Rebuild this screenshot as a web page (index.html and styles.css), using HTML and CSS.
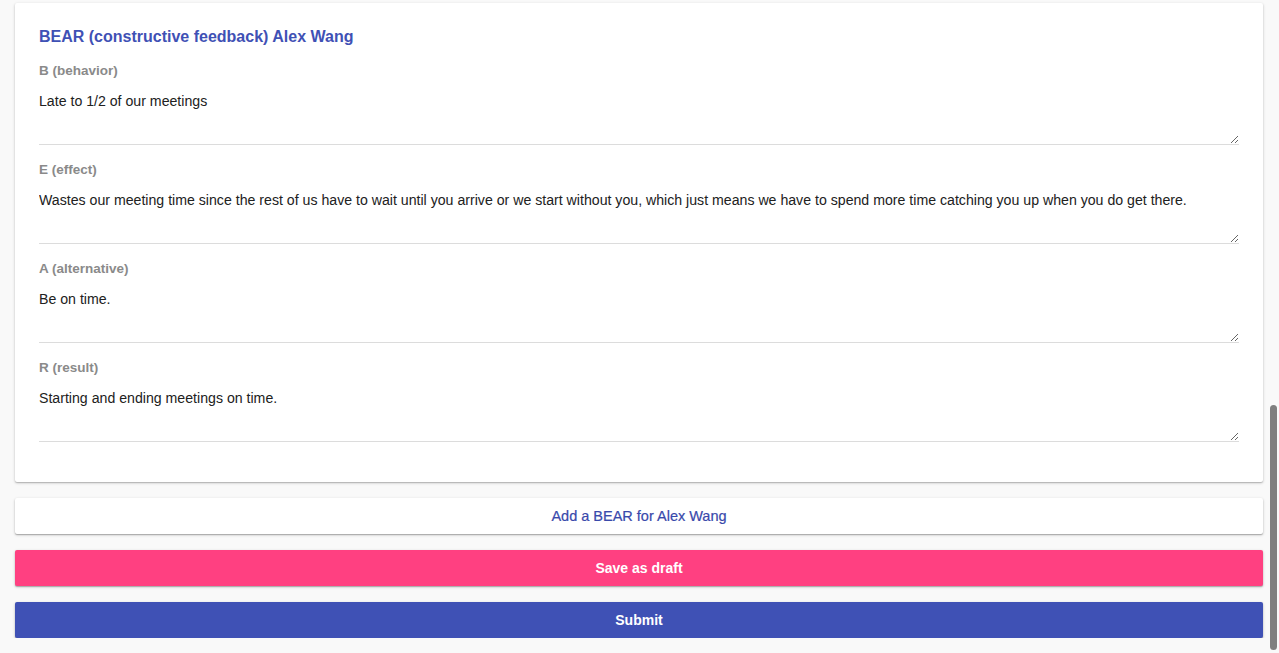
FILE: index.html
```html
<!DOCTYPE html>
<html>
<head>
<meta charset="utf-8">
<link rel="stylesheet" href="styles.css">
</head>
<body>
<main class="page">
  <section class="card">
    <h2 class="card-title">BEAR (constructive feedback) Alex Wang</h2>
    <div class="field">
      <label class="field-label">B (behavior)</label>
      <textarea class="field-input">Late to 1/2 of our meetings</textarea>
    </div>
    <div class="field">
      <label class="field-label">E (effect)</label>
      <textarea class="field-input">Wastes our meeting time since the rest of us have to wait until you arrive or we start without you, which just means we have to spend more time catching you up when you do get there.</textarea>
    </div>
    <div class="field">
      <label class="field-label">A (alternative)</label>
      <textarea class="field-input">Be on time.</textarea>
    </div>
    <div class="field">
      <label class="field-label">R (result)</label>
      <textarea class="field-input">Starting and ending meetings on time.</textarea>
    </div>
  </section>
  <button class="btn btn-add">Add a BEAR for Alex Wang</button>
  <button class="btn btn-draft">Save as draft</button>
  <button class="btn btn-submit">Submit</button>
</main>
<div class="scroll-thumb"></div>
</body>
</html>
```
FILE: styles.css
```css
html, body {
  margin: 0;
  padding: 0;
  background: #f9f9f9;
  font-family: "Liberation Sans", Arial, sans-serif;
  overflow: hidden;
}

.page {
  display: flex;
  flex-direction: column;
  gap: 16px;
  margin: 3px 16px 0 15px;
}

.card {
  background: #fff;
  border-radius: 2px;
  box-shadow: 0 1px 3px rgba(0,0,0,0.22), 0 1px 1px rgba(0,0,0,0.14);
  padding: 24px 24px 40px 24px;
  display: flex;
  flex-direction: column;
}

.card-title {
  margin: 0 0 16px 0;
  font-size: 16px;
  line-height: 20px;
  font-weight: bold;
  color: #3f51b5;
}

.field {
  display: flex;
  flex-direction: column;
  margin-bottom: 17px;
}
.field:last-child { margin-bottom: 0; }

.field-label {
  font-size: 13.5px;
  line-height: 16px;
  font-weight: bold;
  color: #8a8a8a;
  margin-bottom: 12px;
}

.field-input {
  box-sizing: border-box;
  height: 54px;
  border: none;
  border-bottom: 1px solid #dcdcdc;
  padding: 0;
  margin: 0;
  font-family: "Liberation Sans", Arial, sans-serif;
  font-size: 14.15px;
  line-height: 20px;
  color: #212121;
  resize: vertical;
  outline: none;
  background: transparent;
}

.btn {
  height: 36px;
  border: none;
  border-radius: 2px;
  font-family: "Liberation Sans", Arial, sans-serif;
  font-size: 14px;
  padding: 0;
  box-shadow: 0 1px 3px rgba(0,0,0,0.22), 0 1px 1px rgba(0,0,0,0.2);
}

.btn-add {
  background: #fff;
  color: #3949ab;
  font-size: 14.5px;
  -webkit-text-stroke: 0.2px #3949ab;
}

.btn-draft {
  background: #ff4081;
  color: #fff;
  font-weight: bold;
}

.btn-submit {
  background: #3f51b5;
  color: #fff;
  font-weight: bold;
}

.scroll-thumb {
  position: fixed;
  right: 2px;
  top: 405px;
  width: 7px;
  height: 245px;
  border-radius: 4px;
  background: #7f7f7f;
}
```
